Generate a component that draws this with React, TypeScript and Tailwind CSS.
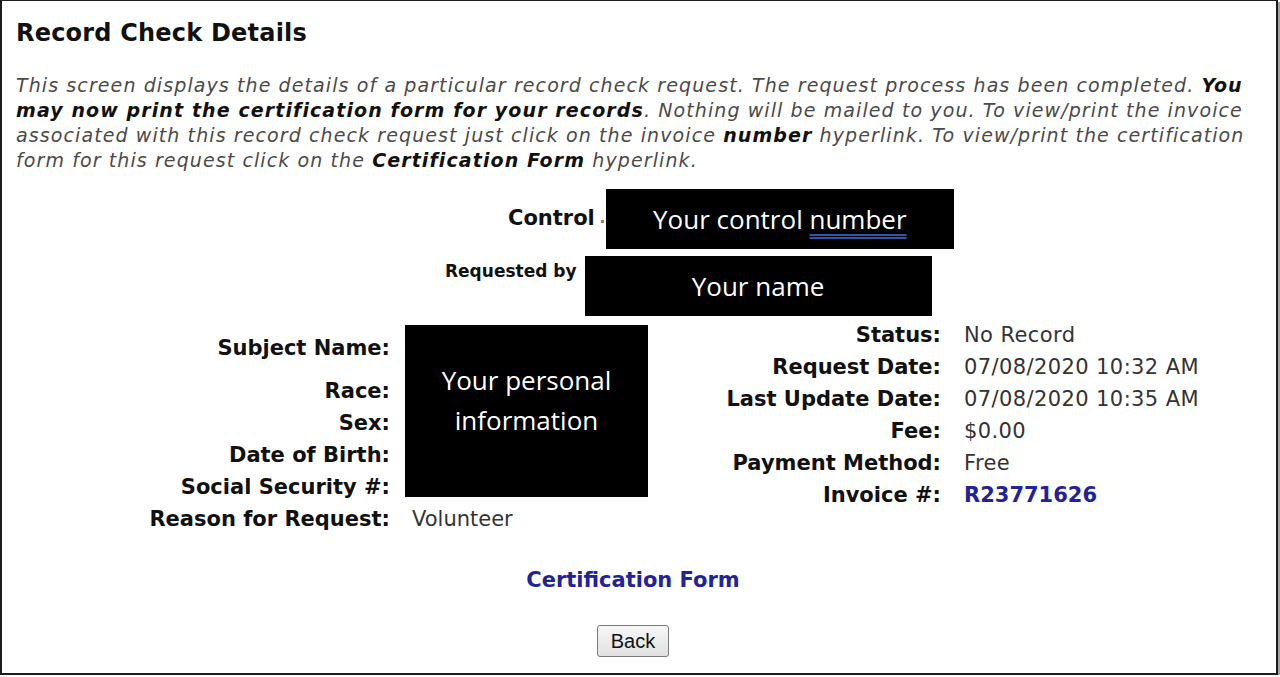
import React from 'react';

const subjectRows = ['Race:', 'Sex:', 'Date of Birth:', 'Social Security #:'];

const statusRows: { label: string; value: string; link?: boolean }[] = [
  { label: 'Status:', value: 'No Record' },
  { label: 'Request Date:', value: '07/08/2020 10:32 AM' },
  { label: 'Last Update Date:', value: '07/08/2020 10:35 AM' },
  { label: 'Fee:', value: '$0.00' },
  { label: 'Payment Method:', value: 'Free' },
  { label: 'Invoice #:', value: 'R23771626', link: true },
];

const App = () => {
  return (
    <div className="w-[1278px] h-[675px] overflow-hidden bg-white border-2 border-t border-[#1c1c1c] shadow-[2px_2px_0_#a3a3a3] font-['DejaVu_Sans',Verdana,sans-serif] text-[#111]">
      <div className="px-[14px]">
        {/* Heading */}
        <h1 className="pt-[16px] text-[24px] leading-[32px] font-bold tracking-[0.2px] text-[#111]">
          Record Check Details
        </h1>

        <p className="mt-[24px] -mr-[4px] text-[19px] leading-[25px] italic tracking-[1.1px] text-[#4a4a4a]">
          This screen displays the details of a particular record check request. The request process has been completed.{' '}
          <b className="text-[#111]">You may now print the certification form for your records</b>. Nothing will be mailed to you. To
          view/print the invoice associated with this record check request just click on the invoice{' '}
          <b className="text-[#111]">number</b> hyperlink. To view/print the certification form for this request click on the{' '}
          <b className="text-[#111]">Certification Form</b> hyperlink.
        </p>

        {/* Control number (redacted) */}
        <div className="mt-[16px] flex items-center pl-[492px] h-[60px]">
          <span className="text-[21px] font-bold">Control</span>
          <div className="ml-[6px] mt-[4px] w-[3px] h-[3px] bg-[#b87a3c]" />
          <div className="ml-[2px] w-[348px] h-[60px] bg-black flex items-center justify-center font-['Open_Sans',sans-serif] text-[26px] text-white">
            <span>
              Your control{' '}
              <span className="underline decoration-double decoration-[#2d55b0] underline-offset-[5px]">number</span>
            </span>
          </div>
        </div>

        {/* Requested by (redacted) */}
        <div className="mt-[7px] flex items-start pl-[429px] h-[60px]">
          <span className="pt-[3px] text-[17px] leading-[24px] font-bold">Requested by</span>
          <div className="ml-[8px] w-[347px] h-[60px] bg-black flex items-center justify-center font-['Open_Sans',sans-serif] text-[26px] text-white">
            Your name
          </div>
        </div>

        {/* Details */}
        <div className="mt-[3px] flex items-start">
          <div className="mt-[6px] grid grid-cols-[374px_auto] grid-rows-[50px_32px_32px_32px_32px_32px] gap-x-[15px] text-[21px] leading-[32px]">
            <div className="pt-[7px] text-right font-bold">Subject Name:</div>
            <div className="row-span-5 self-start w-[243px] h-[172px] pb-[22px] bg-black flex items-center justify-center text-center font-['Open_Sans',sans-serif] text-[26px] leading-[40px] text-white">
              Your personal
              <br />
              information
            </div>
            {subjectRows.map((l) => (
              <div key={l} className="col-start-1 text-right font-bold">
                {l}
              </div>
            ))}
            <div className="col-start-1 text-right font-bold">Reason for Request:</div>
            <div className="pl-[7px] text-[#333]">Volunteer</div>
          </div>

          <div className="grid grid-cols-[293px_auto] gap-x-[23px] text-[21px] leading-[32px]">
            {statusRows.map((r) => (
              <React.Fragment key={r.label}>
                <div className="text-right font-bold">{r.label}</div>
                <div className={r.link ? 'font-bold text-[#22229a]' : 'tracking-[0.4px] text-[#333]'}>{r.value}</div>
              </React.Fragment>
            ))}
          </div>
        </div>

        {/* Actions */}
        <div className="mt-[29px] pr-[12px] flex flex-col items-center">
          <a className="text-[21px] leading-[32px] font-bold text-[#22229a] cursor-pointer">Certification Form</a>
          <button className="mt-[29px] w-[72px] h-[32px] rounded-[3px] border border-[#7a7a7a] bg-gradient-to-b from-[#f7f7f7] to-[#e1e1e1] font-['Liberation_Sans',Arial,sans-serif] text-[20px] text-[#111]">
            Back
          </button>
        </div>
      </div>
    </div>
  );
};

export default App;
